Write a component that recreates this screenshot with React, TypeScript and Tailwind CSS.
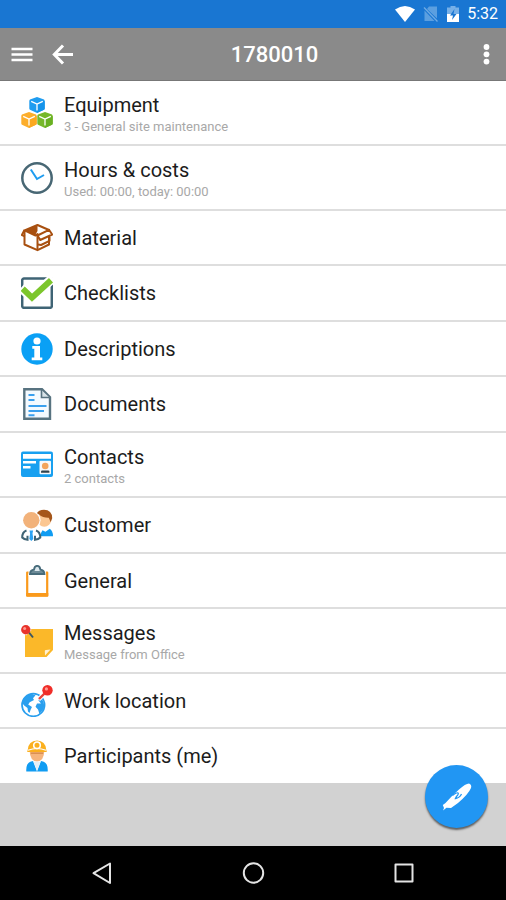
import React from 'react'

type IconProps = { children: React.ReactNode }
const Icon = ({ children }: IconProps) => (
  <svg className="w-8 h-8 shrink-0" viewBox="0 0 32 32" fill="none" aria-hidden="true">
    {children}
  </svg>
)

type CubeProps = { x: number; y: number; color: string; dark: string }
const Cube = ({ x, y, color, dark }: CubeProps) => (
  <g transform={`translate(${x} ${y})`}>
    <path d="M8 0 15 2.500Q15.700 3 15.700 4V11.500Q15.700 12.300 15 12.800L8 16 1 12.800Q.3 12.300 .3 11.500V4Q.3 3 1 2.500Z" fill={color} />
    <path d="M8 7.500V16L15 12.800Q15.700 12.300 15.700 11.500V4Z" fill={dark} />
    <path d="M2.200 4.400 8 7 13.800 4.400M8 7v6.500" stroke="#fff" strokeWidth="1.300" />
  </g>
)

const EquipmentIcon = () => (
  <Icon>
    <Cube x={8} y={0} color="#1e9cf0" dark="#1593ea" />
    <Cube x={0} y={15} color="#fcae2c" dark="#fba81f" />
    <Cube x={16} y={15} color="#76b82a" dark="#69b022" />
  </Icon>
)

const HoursIcon = () => (
  <Icon>
    <circle cx="16" cy="16" r="14.700" stroke="#486774" strokeWidth="2.500" />
    <path d="M9.800 7.500 16 17l7-4" stroke="#1e9cf0" strokeWidth="2" />
  </Icon>
)

const MaterialIcon = () => (
  <Icon>
    <path d="M3.500 8.500 16.500 3l11.500 5v14.500l-11.500 5.700-13-5.700Z" fill="#fff" stroke="#a85010" strokeWidth="2" strokeLinejoin="round" />
    <path d="M4 8.500 16.500 3v6L14 13.500Z" fill="#a85010" />
    <path d="M3.500 8 .9 13l3 1.300M4 8.500l10.500 5 2-1.500v16" stroke="#a85010" strokeWidth="2" strokeLinejoin="round" />
    <path d="M16.500 13.500 28 7.800l3.200 4.700-12 5.500Z" fill="#fff" stroke="#a85010" strokeWidth="2" strokeLinejoin="round" />
    <path d="M17 22.500l3 .5 8.500-4.200v-4" stroke="#a85010" strokeWidth="2" strokeLinejoin="round" />
  </Icon>
)

const ChecklistsIcon = () => (
  <Icon>
    <rect x="1.200" y="1.500" width="29.600" height="29.300" rx="1.800" stroke="#3f6475" strokeWidth="2.500" />
    <path d="M0 10.800 10.700 20.300 32 1" stroke="#fff" strokeWidth="9.500" />
    <path d="M1.700 11.800 11 20.600 30 3.200" stroke="#7cc62c" strokeWidth="6" />
  </Icon>
)

const DescriptionsIcon = () => (
  <Icon>
    <circle cx="16" cy="16" r="15.700" fill="#0aa0f5" />
    <circle cx="16" cy="8" r="3.600" fill="#fff" />
    <path d="M11.300 13h7.700v11.500h2.300V27.300H10.700v-2.800H13.300v-8.700h-2Z" fill="#fff" />
  </Icon>
)

const DocumentsIcon = () => (
  <Icon>
    <path d="M3.300 1.200H21l8 8v21.600H3.300Z" fill="#f4faff" stroke="#587380" strokeWidth="2.400" />
    <path d="M20.500 2v7.500H28.500" fill="#d8e3e8" stroke="#587380" strokeWidth="1.600" />
    <path d="M7.500 7h6M7.500 12h6M7.500 18h18M7.500 23h15.500M7.500 27.300h6" stroke="#3aa0ee" strokeWidth="2" />
  </Icon>
)

const ContactsIcon = () => (
  <Icon>
    <rect x="0" y="2.500" width="32" height="25.500" rx="2" fill="#18a0f0" />
    <path d="M2 5h28v4.700H2zM2 12h13v2.500H2zM2 17h7.500v2.600H2z" fill="#fff" />
    <rect x="18.500" y="11.800" width="11.500" height="13.500" rx="1" fill="#f6f8fa" />
    <circle cx="24.200" cy="17" r="3.300" fill="#f2a45c" />
    <path d="M20 23.800v-1.300q0-1 1.200-1h6q1.200 0 1.200 1v1.300Z" fill="#31434c" />
  </Icon>
)

const CustomerIcon = () => (
  <Icon>
    <circle cx="23.300" cy="11" r="6.800" fill="#fbc792" />
    <path d="M15.500 5Q17.500 .8 23 .8q8 0 8.200 8.500l-1.500 4-1.900-4.500Q22 9 18 5.500Z" fill="#a5561a" />
    <path d="M20 27.200q-.5-4 1.500-6l3 1.500 4.200-3q3.300 2 3.300 7.500Z" fill="#109cf2" />
    <circle cx="10.300" cy="11.300" r="9.300" fill="#fff" />
    <circle cx="10.300" cy="11.300" r="8.200" fill="#f2b27a" />
    <path d="M5.500 21.500Q1.200 23 1.200 28.500q1.800 2 5.300 2.300v-4M15 21.500q4.300 1.500 4.300 7-1.800 2-5.300 2.300v-4" fill="#fff" stroke="#3f6475" strokeWidth="2" />
    <path d="M8.500 21.500h3.600l-.6 3 .8 5.500L10.300 32l-2-2 .8-5.500Z" fill="#2aa3f4" />
  </Icon>
)

const GeneralIcon = () => (
  <Icon>
    <path d="M6.200 7.500v23h20v-23Z" fill="#fff" stroke="#fa9a1c" strokeWidth="2.200" strokeLinejoin="round" />
    <path d="M5.100 28h22.200v3q0 .8-1 .8H6.100q-1 0-1-.8Z" fill="#fa9a1c" />
    <path d="M7.500 5.500h17.400v5.500H7.500Z" fill="#fff" />
    <path d="M9 9q.2-4 4-4.300Q13.500.9 16.200.9T19.400 4.700q3.800.3 4 4.300Z" fill="#dce8ee" stroke="#486c7b" strokeWidth="1.900" />
    <path d="M9.500 7h13.500" stroke="#486c7b" strokeWidth="1.500" />
    <path d="M12.500 4.500 14 3.500M18.500 3.500 20 4.500" stroke="#486c7b" strokeWidth="1" />
  </Icon>
)

const MessagesIcon = () => (
  <Icon>
    <path d="M4 4H32V25l-6.500 7H4Z" fill="#fbb829" />
    <path d="M29.500 24.500l-5.500 6-.2-4.500q0-1 1.200-1Z" fill="#fff1d0" />
    <path d="M4 9.500 9.500 4" stroke="#fff" strokeWidth="3" />
    <path d="M8 7.500l4 5" stroke="#3c5662" strokeWidth="2" />
    <circle cx="4.800" cy="4.800" r="4.700" fill="#e8332b" />
    <circle cx="3.600" cy="3.500" r="1.500" fill="#ff9a90" />
  </Icon>
)

const WorkLocationIcon = () => (
  <Icon>
    <circle cx="12.300" cy="20" r="11.300" fill="#fff" stroke="#2a9fee" strokeWidth="1.700" />
    <path d="M2.500 14q3-4.800 8.500-5l3.500 1.200-2.500 3 1 1.800-4.300 2.300-1.500 2.200 3.800 2.500-1.300 2.500-1.200 3.500-1.500-1.500-.5-3.500-3.300-2.500Q0 17.500 2.500 14ZM18 12.500l3.500 2.500q2.500 4.500 1 9L18.500 29l-1.500-4.500-2.500-2.700 1.500-3.300 4 0-2.500-3Z" fill="#2a9fee" />
    <path d="M17.500 14.500 24 8" stroke="#fff" strokeWidth="4.500" />
    <path d="M18 14 24 8" stroke="#e84239" strokeWidth="2.400" />
    <circle cx="26.500" cy="5.300" r="5.200" fill="#f02d28" />
    <circle cx="25.400" cy="3.900" r="1.600" fill="#ff9c95" />
  </Icon>
)

const ParticipantsIcon = () => (
  <Icon>
    <path d="M8.700 11h14.600q-.3 10-7.300 10.500Q9 21 8.700 11Z" fill="#f5b47c" />
    <path d="M6.800 9.500Q7.500.8 16 .4q8.500.4 9.200 9.100l.6 2.500H6.200Z" fill="#fbb01e" />
    <path d="M7 10.200q9-3.300 18 0" stroke="#fff" strokeWidth="1.100" />
    <circle cx="16" cy="5.300" r="3.300" fill="#fbb01e" stroke="#fff" strokeWidth="1.600" />
    <path d="M9.800 13.200h12.400" stroke="#d98f50" strokeWidth="1.500" />
    <path d="M5.300 31.500q-.5-8 4-9.700l2.700-.8 4 10.500ZM26.700 31.500q.5-8-4-9.700L20 21l-4 10.500Z" fill="#109cf2" />
    <path d="M12.500 21.700h7L16 30.500Z" fill="#e4eff6" />
  </Icon>
)

const items = [
  { title: 'Equipment', detail: '3 - General site maintenance', icon: <EquipmentIcon /> },
  { title: 'Hours & costs', detail: 'Used: 00:00, today: 00:00', icon: <HoursIcon /> },
  { title: 'Material', icon: <MaterialIcon /> },
  { title: 'Checklists', icon: <ChecklistsIcon /> },
  { title: 'Descriptions', icon: <DescriptionsIcon /> },
  { title: 'Documents', icon: <DocumentsIcon /> },
  { title: 'Contacts', detail: '2 contacts', icon: <ContactsIcon /> },
  { title: 'Customer', icon: <CustomerIcon /> },
  { title: 'General', icon: <GeneralIcon /> },
  { title: 'Messages', detail: 'Message from Office', icon: <MessagesIcon /> },
  { title: 'Work location', icon: <WorkLocationIcon /> },
  { title: 'Participants (me)', icon: <ParticipantsIcon /> },
]

const StatusBar = () => (
  <div className="h-7 px-2 flex items-center justify-end bg-[#1976d2] text-white">
    <svg className="w-5 h-4 mr-2" viewBox="0 0 20 16" aria-hidden="true">
      <path d="M0 3.500Q10-3.500 20 3.500L10 16Z" fill="#fff" />
    </svg>
    <svg className="w-4 h-4 mr-2" viewBox="0 0 16 16" aria-hidden="true">
      <path d="M6 .5h8v12L4 3ZM1.500 4.500l10 10.500h-10Z" fill="#5b9fe0" />
      <path d="M1 1.500 14.500 15.500" stroke="#6fabe4" strokeWidth="1.300" />
    </svg>
    <svg className="w-3 h-4 mr-2" viewBox="0 0 12 16" aria-hidden="true">
      <path d="M3.500 0h5v1.500H12V8H0V1.500h3.500Z" fill="#76b0e8" />
      <path d="M0 8h12v8H0Z" fill="#fff" />
      <path d="M7.500 3 3 9.500h3L5 14l4.500-6H6.500Z" fill="#1976d2" />
    </svg>
    <span className="text-base">5:32</span>
  </div>
)

const AppBar = () => (
  <header className="h-[53px] pl-[11px] pr-1 flex items-center bg-[#8a8a8a] text-white border-b border-[#777]">
    <button type="button" aria-label="Menu" className="mr-4">
      <svg className="w-6 h-6" viewBox="0 0 24 24" stroke="currentColor" strokeWidth="2.600">
        <path d="M.5 7h21M.5 12.500h21M.5 18h21" />
      </svg>
    </button>
    <button type="button" aria-label="Back">
      <svg className="w-6 h-6" viewBox="0 0 24 24" fill="none" stroke="currentColor" strokeWidth="3">
        <path d="M12 3.500 3.300 12.500l8.700 9M3.500 12.500H22" />
      </svg>
    </button>
    <h1 className="flex-1 pl-1 text-center text-[22px] font-medium">1780010</h1>
    <button type="button" aria-label="More options" className="w-8 flex justify-center">
      <svg className="w-6 h-6" viewBox="0 0 24 24" fill="currentColor">
        <circle cx="12.500" cy="5" r="2.900" />
        <circle cx="12.500" cy="12.300" r="2.900" />
        <circle cx="12.500" cy="19.600" r="2.900" />
      </svg>
    </button>
  </header>
)

const NavBar = () => (
  <nav className="h-[54px] px-[27px] flex items-center justify-around bg-black text-[#e4e4e4]">
    <button type="button" aria-label="Back">
      <svg className="w-6 h-6" viewBox="0 0 24 24" fill="none" stroke="currentColor" strokeWidth="2" strokeLinejoin="round">
        <path d="M20 2.500v19.500L3.500 12.200Z" />
      </svg>
    </button>
    <button type="button" aria-label="Home">
      <svg className="w-6 h-6" viewBox="0 0 24 24" fill="none" stroke="currentColor" strokeWidth="2">
        <circle cx="12.500" cy="12" r="9.700" />
      </svg>
    </button>
    <button type="button" aria-label="Recent apps">
      <svg className="w-6 h-6" viewBox="0 0 24 24" fill="none" stroke="currentColor" strokeWidth="2" strokeLinejoin="round">
        <rect x="3.500" y="3.500" width="17" height="17" />
      </svg>
    </button>
  </nav>
)

const App = () => {
  return (
    <div className="min-h-screen flex flex-col bg-[#d2d2d2] font-[Roboto,sans-serif]">
      <StatusBar />
      <AppBar />
      <main className="relative flex-1">
        <ul className="bg-white">
          {items.map(({ title, detail, icon }) => (
            <li
              key={title}
              className={`border-b-2 border-[#dedede] last:border-[#d2d2d2] ${
                detail ? 'h-[65px]' : 'h-[55px] even:h-14'
              }`}
            >
              <button
                type="button"
                className="w-full h-full pl-[21px] pr-4 flex items-center gap-[11px] text-left"
              >
                {icon}
                <span className={detail ? 'flex flex-col pt-1' : 'flex flex-col'}>
                  <span className="text-xl leading-6 text-[#1c1c1c]">{title}</span>
                  {detail && (
                    <span className="text-[13px] leading-5 text-[#a8a8a8]">{detail}</span>
                  )}
                </span>
              </button>
            </li>
          ))}
        </ul>
        <button
          type="button"
          aria-label="Sign"
          className="absolute right-[18px] bottom-[18px] w-[63px] h-[63px] rounded-full flex items-center justify-center bg-[#2196f3] shadow-[0_2px_2px_rgba(0,0,0,0.55)]"
        >
          <svg className="w-8 h-8" viewBox="0 0 32 32" fill="none" aria-hidden="true">
            <path d="M2 29.500 3 27 1.800 24 4.500 22Q10 15.500 18 8.500 24.500 2.500 28 2.500q3 1 2 4.500-2.500 6-13 15L10 27l-4.500-.3Z" fill="#fff" />
            <path d="M11.500 14.500q4.500-3.500 5.500-2.500t-1.500 3.500l-1 2q4-.5 6-4.500" stroke="#2196f3" strokeWidth="1.300" />
          </svg>
        </button>
      </main>
      <NavBar />
    </div>
  )
}

export default App
